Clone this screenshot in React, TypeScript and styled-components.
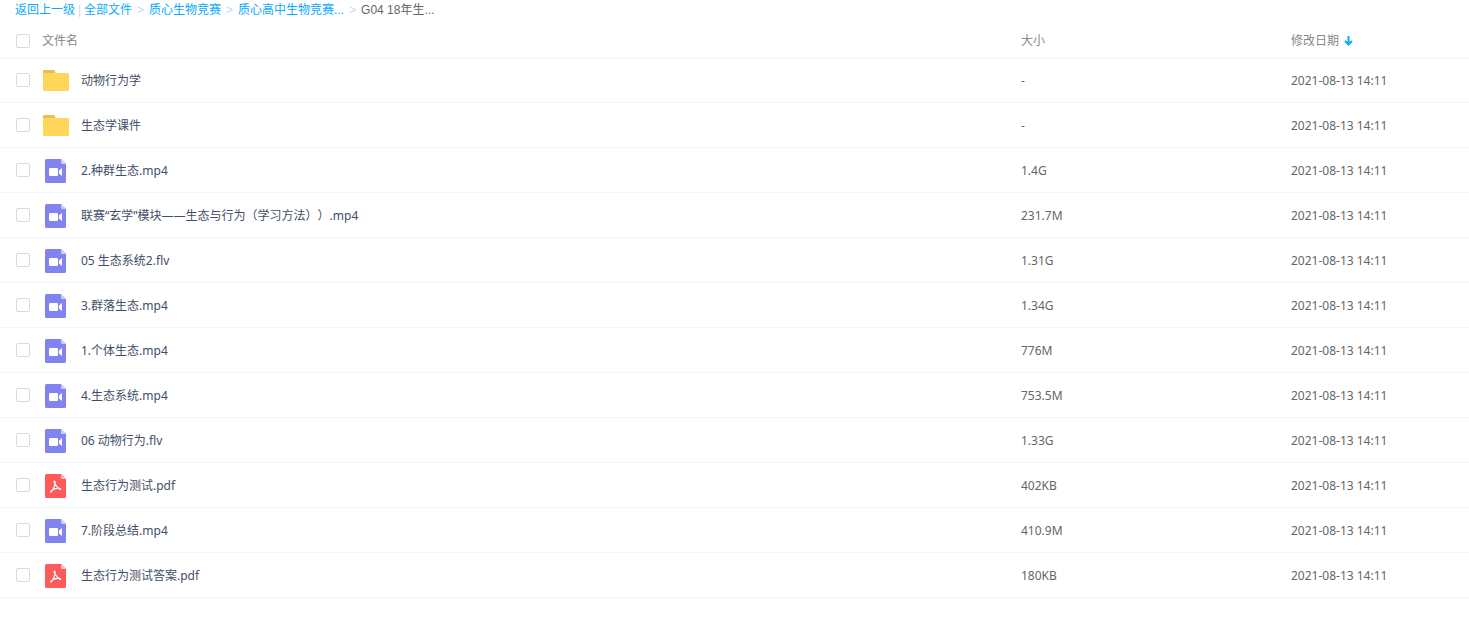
import React from "react";
import styled, { createGlobalStyle } from "styled-components";

const GlobalStyle = createGlobalStyle`
  body {
    margin: 0;
    background: #fff;
    color: #424e67;
    font: 12px/18px "Noto Sans", "Noto Sans CJK SC", sans-serif;
    text-spacing-trim: space-all;
  }
`;

const Breadcrumb = styled.nav`
  display: flex;
  align-items: center;
  height: 18px;
  padding: 1px 0 0 15px;
  font-family: "Liberation Sans", "Noto Sans CJK SC", sans-serif;
  white-space: nowrap;
`;

const CrumbLink = styled.a`
  color: #09aaff;
  text-decoration: none;
`;

const Divider = styled.span`
  width: 9px;
  color: #c4d8f6;
  text-align: center;
`;

const Chevron = styled.span`
  width: 17px;
  color: #c4d8f6;
  text-align: center;
`;

const Current = styled.span`
  color: #666;
`;

const Table = styled.table`
  width: 100%;
  table-layout: fixed;
  border-spacing: 0;
`;

const HeadCell = styled.th<{ $width?: number }>`
  width: ${(p) => (p.$width ? `${p.$width}px` : "auto")};
  height: 39px;
  padding: 4px 0 0;
  box-sizing: border-box;
  box-shadow: 0 1px 0 #f2f6fd;
  color: #888;
  font-weight: normal;
  text-align: left;
`;

const Cell = styled.td<{ $top?: number }>`
  height: 45px;
  padding: ${(p) => p.$top ?? 0}px 0 0;
  box-sizing: border-box;
  border-bottom: 1px solid #f2f6fd;
  color: #666;
`;

const NameBox = styled.div<{ $gap: number }>`
  display: flex;
  align-items: center;
  gap: ${(p) => p.$gap}px;
  padding-left: 16px;
`;

const Check = styled.input`
  appearance: none;
  flex: none;
  width: 14px;
  height: 14px;
  margin: 0;
  border: 1px solid #d5dae3;
  border-radius: 2px;
  background: #fff;

  &:checked {
    border-color: #09aaff;
    background: #09aaff;
  }
`;

const FileLabel = styled.label`
  display: flex;
  align-items: center;
  gap: 12px;
  padding-top: 2px;
  color: #424e67;
  white-space: nowrap;
`;

const IconSlot = styled.span`
  display: flex;
  justify-content: center;
  width: 26px;
`;

const SortButton = styled.button`
  display: flex;
  align-items: center;
  gap: 5px;
  padding: 0;
  border: 0;
  background: none;
  color: inherit;
  font: inherit;
`;

const FolderIcon = () => (
  <svg width="26" height="22" viewBox="0 0 26 22" aria-hidden="true">
    <path d="M0 5V1.2Q0 0 1.2 0H10.5Q11.4 0 11.8 1L13 4V5Z" fill="#ecbd4b" />
    <path d="M0 3H24.6Q26 3 26 4.4V19.6Q26 21 24.6 21H1.4Q0 21 0 19.6Z" fill="#ffd659" />
  </svg>
);

const VideoIcon = () => (
  <svg width="22" height="24" viewBox="0 0 22 24" aria-hidden="true">
    <path d="M1.5 0H16L21 5V22.5Q21 24 19.5 24H1.5Q0 24 0 22.5V1.5Q0 0 1.5 0Z" fill="#8183f1" />
    <path d="M16 0L21 5H17.2Q16 5 16 3.8Z" fill="#cdcdfa" />
    <rect x="4" y="9" width="9" height="8" rx="1.2" fill="#fff" />
    <path d="M17 9V17L14 14.4V11.6Z" fill="#fff" />
  </svg>
);

const PdfIcon = () => (
  <svg width="22" height="24" viewBox="0 0 22 24" aria-hidden="true">
    <path d="M1.5 0H16L21 5V22.5Q21 24 19.5 24H1.5Q0 24 0 22.5V1.5Q0 0 1.5 0Z" fill="#ff5959" />
    <path d="M16 0L21 5H17.2Q16 5 16 3.8Z" fill="#ffbdbd" />
    <path
      d="M9.8 7.2C8.8 6.2 8.9 8.2 9.8 9.6C10.8 11.4 12.3 13.6 14.6 15.2C16.2 16.3 16 14.3 14.4 14.2C11.4 14 8.6 14.9 6.2 16.8C4.8 18 5.9 18.7 6.8 17.5C8.4 15.3 9.8 12 10.2 9.2C10.4 8.2 10.3 7.6 9.8 7.2Z"
      fill="none"
      stroke="#fff"
      strokeWidth="1.1"
      strokeLinejoin="round"
    />
  </svg>
);

const SortArrow = () => (
  <svg width="9" height="10" viewBox="0 0 9 10" fill="none" stroke="#09aaff" strokeWidth="2" aria-hidden="true">
    <path d="M4.5 0V8.5M1 5L4.5 8.5L8 5" />
  </svg>
);

type Kind = "folder" | "video" | "pdf";

const icons: Record<Kind, React.FC> = { folder: FolderIcon, video: VideoIcon, pdf: PdfIcon };

const files: { name: string; kind: Kind; size: string }[] = [
  { name: "动物行为学", kind: "folder", size: "-" },
  { name: "生态学课件", kind: "folder", size: "-" },
  { name: "2.种群生态.mp4", kind: "video", size: "1.4G" },
  { name: "联赛“玄学”模块——生态与行为（学习方法））.mp4", kind: "video", size: "231.7M" },
  { name: "05 生态系统2.flv", kind: "video", size: "1.31G" },
  { name: "3.群落生态.mp4", kind: "video", size: "1.34G" },
  { name: "1.个体生态.mp4", kind: "video", size: "776M" },
  { name: "4.生态系统.mp4", kind: "video", size: "753.5M" },
  { name: "06 动物行为.flv", kind: "video", size: "1.33G" },
  { name: "生态行为测试.pdf", kind: "pdf", size: "402KB" },
  { name: "7.阶段总结.mp4", kind: "video", size: "410.9M" },
  { name: "生态行为测试答案.pdf", kind: "pdf", size: "180KB" },
];

export default function App() {
  return (
    <>
      <GlobalStyle />
      <Breadcrumb>
        <CrumbLink href="#back">返回上一级</CrumbLink>
        <Divider>|</Divider>
        <CrumbLink href="#all">全部文件</CrumbLink>
        <Chevron>&gt;</Chevron>
        <CrumbLink href="#biology">质心生物竞赛</CrumbLink>
        <Chevron>&gt;</Chevron>
        <CrumbLink href="#senior">质心高中生物竞赛...</CrumbLink>
        <Chevron>&gt;</Chevron>
        <Current>G04 18年生...</Current>
      </Breadcrumb>
      <Table>
        <thead>
          <tr>
            <HeadCell>
              <NameBox $gap={12}>
                <Check type="checkbox" id="select-all" />
                <label htmlFor="select-all">文件名</label>
              </NameBox>
            </HeadCell>
            <HeadCell $width={270}>大小</HeadCell>
            <HeadCell $width={178}>
              <SortButton type="button">
                修改日期
                <SortArrow />
              </SortButton>
            </HeadCell>
          </tr>
        </thead>
        <tbody>
          {files.map((file, i) => {
            const Icon = icons[file.kind];
            return (
              <tr key={file.name}>
                <Cell>
                  <NameBox $gap={13}>
                    <Check type="checkbox" id={`file-${i}`} />
                    <FileLabel htmlFor={`file-${i}`}>
                      <IconSlot>
                        <Icon />
                      </IconSlot>
                      {file.name}
                    </FileLabel>
                  </NameBox>
                </Cell>
                <Cell $top={2}>{file.size}</Cell>
                <Cell $top={2}>2021-08-13 14:11</Cell>
              </tr>
            );
          })}
        </tbody>
      </Table>
    </>
  );
}
